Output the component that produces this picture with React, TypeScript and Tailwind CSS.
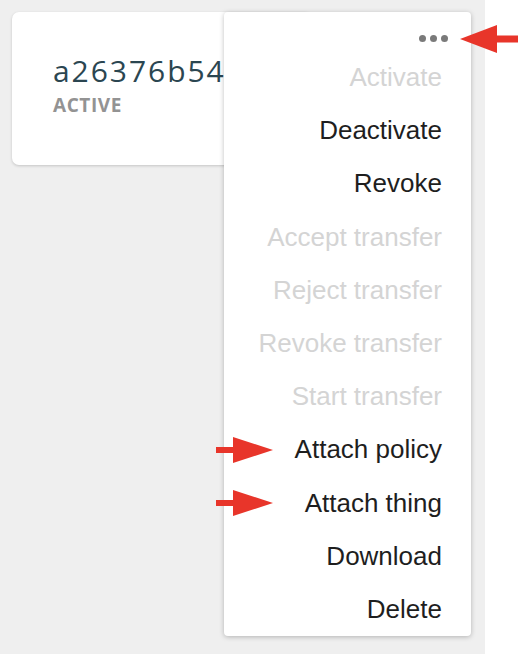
import React from "react";

const items: { label: string; enabled: boolean }[] = [
  { label: "Activate", enabled: false },
  { label: "Deactivate", enabled: true },
  { label: "Revoke", enabled: true },
  { label: "Accept transfer", enabled: false },
  { label: "Reject transfer", enabled: false },
  { label: "Revoke transfer", enabled: false },
  { label: "Start transfer", enabled: false },
  { label: "Attach policy", enabled: true },
  { label: "Attach thing", enabled: true },
  { label: "Download", enabled: true },
  { label: "Delete", enabled: true },
];

function LeftArrow({ top }: { top: number }) {
  return (
    <svg
      className="absolute"
      style={{ left: 214, top: top - 15 }}
      width="62"
      height="30"
      viewBox="0 0 62 30"
    >
      <rect x="2" y="12" width="22" height="6" fill="#e8352a" />
      <polygon points="19,2 59,15 19,28" fill="#e8352a" />
    </svg>
  );
}

export default function App() {
  return (
    <div className="w-[518px] h-[654px] bg-white flex" style={{ fontFamily: "'Liberation Sans', Arial, sans-serif" }}>
      <div className="relative w-[485px] h-full bg-[#efefef] pt-[12px] pl-[12px]">
        <div className="w-[300px] h-[153px] bg-white rounded-[7px] shadow-[0_1px_3px_rgba(0,0,0,0.18)] pl-[41px] pt-[41px]">
          <div
            className="text-[30px] leading-[36px] text-[#2b4651] tracking-[0.065em] whitespace-nowrap"
            style={{ fontFamily: "'Open Sans', sans-serif" }}
          >
            a26376b54
          </div>
          <div
            className="mt-[6px] text-[19px] leading-[20px] font-bold text-[#939393] tracking-[0.03em]"
            style={{ fontFamily: "'Open Sans', sans-serif" }}
          >
            ACTIVE
          </div>
        </div>

        <div className="absolute left-[224px] top-[12px] w-[247px] bg-white rounded-[4px] shadow-[0_1px_5px_rgba(0,0,0,0.25)] flex flex-col">
          <div className="h-[38.5px] flex justify-end items-start pt-[23px] pr-[23px] gap-[4px]">
            <span className="w-[7px] h-[7px] rounded-full bg-[#7a7a7a]" />
            <span className="w-[7px] h-[7px] rounded-full bg-[#7a7a7a]" />
            <span className="w-[7px] h-[7px] rounded-full bg-[#7a7a7a]" />
          </div>
          {items.map((it) => (
            <div
              key={it.label}
              className={`h-[53.2px] flex items-center justify-end pr-[29px] text-[26px] leading-none ${
                it.enabled ? "text-[#1e1e1e]" : "text-[#d4d4d4]"
              }`}
            >
              {it.label}
            </div>
          ))}
        </div>

        <LeftArrow top={450} />
        <LeftArrow top={503} />
      </div>

      <svg className="absolute" style={{ left: 458, top: 24 }} width="60" height="32" viewBox="0 0 60 32">
        <polygon points="2,15 39,1 39,29" fill="#e8352a" />
        <rect x="36" y="11.5" width="24" height="7" fill="#e8352a" />
      </svg>
    </div>
  );
}
